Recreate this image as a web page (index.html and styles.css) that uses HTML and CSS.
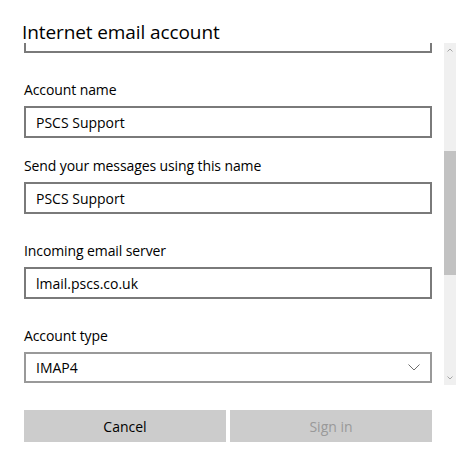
FILE: index.html
```html
<!DOCTYPE html>
<html lang="en">
<head>
  <meta charset="UTF-8">
  <meta name="viewport" content="width=device-width, initial-scale=1.0">
  <title>Internet email account</title>
  <link rel="stylesheet" href="styles.css">
</head>
<body>
  <div class="dialog">
    <h1 class="title">Internet email account</h1>

    <div class="pane">
      <div class="scroll-view">
        <div class="fields">
          <!-- previous field, scrolled mostly out of view -->
          <div class="field field-hidden">
            <input class="text-box" type="text" value="">
          </div>

          <div class="field">
            <label for="accountName">Account name</label>
            <input class="text-box" id="accountName" type="text" value="PSCS Support">
          </div>

          <div class="field field-tight">
            <label for="senderName">Send your messages using this name</label>
            <input class="text-box" id="senderName" type="text" value="PSCS Support">
          </div>

          <div class="field">
            <label for="incoming">Incoming email server</label>
            <input class="text-box" id="incoming" type="text" value="lmail.pscs.co.uk">
          </div>

          <div class="field">
            <label for="accountType">Account type</label>
            <div class="combo" id="accountType">
              <span>IMAP4</span>
              <svg class="chevron" width="12" height="7" viewBox="0 0 12 7">
                <path d="M0.5 0.5 L6 6 L11.5 0.5" fill="none" stroke="#6d6d6d" stroke-width="1"/>
              </svg>
            </div>
          </div>
        </div>
      </div>

      <div class="scrollbar">
        <svg class="arrow" width="6" height="4" viewBox="0 0 6 4">
          <path d="M0.5 3.5 L3 1 L5.5 3.5" fill="none" stroke="#a6a6a6" stroke-width="1"/>
        </svg>
        <div class="track">
          <div class="thumb"></div>
        </div>
        <svg class="arrow" width="6" height="4" viewBox="0 0 6 4">
          <path d="M0.5 0.5 L3 3 L5.5 0.5" fill="none" stroke="#a6a6a6" stroke-width="1"/>
        </svg>
      </div>
    </div>

    <div class="actions">
      <button type="button" class="btn">Cancel</button>
      <button type="button" class="btn" disabled>Sign in</button>
    </div>
  </div>
</body>
</html>
```

FILE: styles.css
```css
/* Account setup dialog */
body {
  margin: 0;
  padding: 0;
  background-color: #ffffff;
  font-family: "Open Sans", "Noto Sans", Arial, sans-serif;
  color: #000;
}

.dialog {
  width: 456px;
  height: 456px;
  display: flex;
  flex-direction: column;
  overflow: hidden;
}

.title {
  margin: 0;
  height: 43px;
  padding: 20px 0 0 22px;
  box-sizing: border-box;
  font-size: 19px;
  font-weight: normal;
  line-height: 24px;
  letter-spacing: -0.1px;
}

/* scrolling area */
.pane {
  display: flex;
  height: 342px;
}

.scroll-view {
  flex: 1;
  overflow: hidden;
  padding: 0 12px 0 24px;
}

.fields {
  display: flex;
  flex-direction: column;
}

.field {
  margin-top: 29px;
}

.field-tight {
  margin-top: 20px;
}

.field-hidden {
  margin-top: -22px;
}

label {
  display: block;
  font-size: 14px;
  line-height: 16px;
  margin-bottom: 8px;
  letter-spacing: -0.1px;
}

.text-box,
.combo {
  display: flex;
  align-items: center;
  width: 100%;
  height: 32px;
  box-sizing: border-box;
  margin: 0;
  padding: 0 10px;
  border: 2px solid #7a7a7a;
  background: #fff;
  font-family: inherit;
  font-size: 14px;
  color: #000;
  outline: none;
}

.combo {
  justify-content: space-between;
  border-color: #999999;
  height: 31px;
}

/* scrollbar */
.scrollbar {
  width: 12px;
  display: flex;
  flex-direction: column;
  align-items: center;
  background: #f0f0f0;
  padding: 5px 0 5px;
  box-sizing: border-box;
}

.arrow {
  flex: none;
}

.track {
  flex: 1;
  width: 100%;
  padding-top: 97px;
  margin: 2px 0;
}

.thumb {
  height: 124px;
  background: #c2c2c2;
}

/* buttons */
.actions {
  display: flex;
  gap: 4px;
  padding: 25px 24px 0 24px;
}

.btn {
  flex: 1;
  height: 32px;
  border: none;
  background: #cccccc;
  font-family: inherit;
  font-size: 14px;
  color: #000;
  padding: 0;
}

.btn:disabled {
  color: #999999;
}
```
